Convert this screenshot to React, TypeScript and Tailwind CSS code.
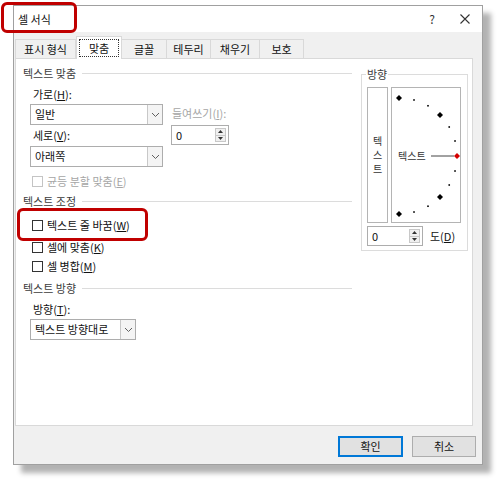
import React from 'react';

const font = { fontFamily: '"Noto Sans CJK KR", "Noto Sans", sans-serif' };

const Chevron: React.FC = () => (
  <svg width="9" height="6" viewBox="0 0 9 6" fill="none">
    <path d="M1 1l3.5 3.5L8 1" stroke="#606060" strokeWidth="1" />
  </svg>
);

const Select: React.FC<{ label: string; width: string }> = ({ label, width }) => (
  <div className={`flex h-[21px] ${width} border border-[#adadad] bg-white`}>
    <div className="flex flex-1 items-center pl-[4px] text-[11px] text-[#111]">{label}</div>
    <div className="flex w-[15px] items-center justify-center border-l border-[#c8c8c8] bg-[#f4f4f4]">
      <Chevron />
    </div>
  </div>
);

const Spinner: React.FC<{ width: string }> = ({ width }) => (
  <div className={`flex h-[20px] ${width} border border-[#adadad] bg-white`}>
    <div className="flex flex-1 items-center pl-[4px] text-[11px] text-[#111]">0</div>
    <div className="my-[2px] mr-[2px] flex w-[11px] flex-col border border-[#c8c8c8] bg-[#f0f0f0]">
      <div className="flex flex-1 items-center justify-center border-b border-[#c8c8c8]">
        <svg width="5" height="3" viewBox="0 0 5 3"><path d="M0 3L2.5 0L5 3z" fill="#333" /></svg>
      </div>
      <div className="flex flex-1 items-center justify-center">
        <svg width="5" height="3" viewBox="0 0 5 3"><path d="M0 0L2.5 3L5 0z" fill="#333" /></svg>
      </div>
    </div>
  </div>
);

const Check: React.FC<{ children: React.ReactNode; disabled?: boolean }> = ({ children, disabled }) => (
  <div className="flex h-[16px] items-center pl-[9px]">
    <div className={`h-[11px] w-[11px] border bg-white ${disabled ? 'border-[#c4c4c4]' : 'border-[#333]'}`} />
    <span className={`ml-[4px] text-[11px] ${disabled ? 'text-[#a6a6a6]' : 'text-[#111]'}`}>{children}</span>
  </div>
);

const Heading: React.FC<{ children: React.ReactNode }> = ({ children }) => (
  <div className="flex h-[16px] items-center gap-[6px]">
    <span className="text-[11px] text-[#3c3c3c]">{children}</span>
    <div className="h-px flex-1 bg-[#dcdcdc]" />
  </div>
);

const Label: React.FC<{ children: React.ReactNode; className?: string }> = ({ children, className = '' }) => (
  <div className={`flex h-[14px] items-center text-[11px] text-[#111] ${className}`}>{children}</div>
);

const tabs = ['표시 형식', '맞춤', '글꼴', '테두리', '채우기', '보호'];
const tabWidths = ['w-[61px]', 'w-[46px]', 'w-[46px]', 'w-[45px]', 'w-[50px]', 'w-[45px]'];

const ArcDial: React.FC = () => {
  const cx = 7;
  const cy = 68;
  const r = 58;
  const pts = [90, 75, 60, 45, 30, 15, -15, -30, -45, -60, -75, -90];
  return (
    <div className="relative h-[136px] w-[70px] border border-[#b4b4b4] bg-white">
      <svg className="absolute inset-0" width="68" height="134" viewBox="0 0 68 134">
        {pts.map((a) => {
          const x = cx + r * Math.cos((a * Math.PI) / 180);
          const y = cy - r * Math.sin((a * Math.PI) / 180);
          const big = a % 45 === 0;
          return big ? (
            <path key={a} d={`M${x} ${y - 3}L${x + 3} ${y}L${x} ${y + 3}L${x - 3} ${y}z`} fill="#000" />
          ) : (
            <rect key={a} x={x - 0.8} y={y - 0.8} width="1.6" height="1.6" fill="#000" />
          );
        })}
        <line x1="39" y1={cy} x2="62" y2={cy} stroke="#444" strokeWidth="1" />
        <path d={`M${cx + r} ${cy - 3}L${cx + r + 3} ${cy}L${cx + r} ${cy + 3}L${cx + r - 3} ${cy}z`} fill="#d40000" />
      </svg>
      <span className="absolute left-[6px] top-[60px] text-[10px] leading-[16px] text-[#333]">텍스트</span>
    </div>
  );
};

export default function App() {
  return (
    <div className="relative h-[481px] w-[500px] overflow-hidden bg-white pl-[13px] pt-[5px]" style={font}>
      <div className="flex h-[460px] w-[470px] flex-col border border-[#a0a0a0] bg-white shadow-[8px_8px_5px_rgba(0,0,0,0.3)]">
        {/* title bar */}
        <div className="flex h-[26px] items-center bg-white pl-[4px] pr-[12px]">
          <span className="text-[11px] text-[#111]">셀 서식</span>
          <span className="ml-auto text-[12px] text-[#333]">?</span>
          <svg className="ml-[25px]" width="10" height="10" viewBox="0 0 10 10">
            <path d="M0.5 0.5L9.5 9.5M9.5 0.5L0.5 9.5" stroke="#333" strokeWidth="1.1" />
          </svg>
        </div>

        <div className="flex flex-1 flex-col bg-[#f0f0f0]">
          {/* tabs */}
          <div className="relative z-10 -mb-px flex items-end pl-[1px] pt-[4px]">
            {tabs.map((t, i) =>
              i === 1 ? (
                <div key={t} className={`flex h-[23px] ${tabWidths[i]} items-center justify-center border border-b-0 border-[#d9d9d9] bg-white px-[2px]`}>
                  <div className="flex h-[18px] w-full items-center justify-center border border-dotted border-[#333] text-[11px] text-[#111]">
                    {t}
                  </div>
                </div>
              ) : (
                <div
                  key={t}
                  className={`flex h-[20px] ${tabWidths[i]} items-center justify-center border border-[#d9d9d9] bg-[#f0f0f0] text-[11px] text-[#111] ${i > 1 ? '-ml-px' : ''}`}
                >
                  {t}
                </div>
              )
            )}
          </div>

          {/* panel */}
          <div className="ml-[1px] flex h-[368px] w-[458px] border border-[#d9d9d9] bg-white pl-[7px] pt-[6px]">
            <div className="flex w-[329px] flex-col">
              <Heading>텍스트 맞춤</Heading>
              <Label className="ml-[10px] mt-[6px]">가로(<u>H</u>):</Label>
              <div className="ml-[7px] mt-[3px] flex gap-[8px]">
                <div className="flex flex-col">
                  <Select label="일반" width="w-[133px]" />
                  <Label className="ml-[3px] mt-[3px]">세로(<u>V</u>):</Label>
                  <div className="mt-[4px]">
                    <Select label="아래쪽" width="w-[133px]" />
                  </div>
                </div>
                <div className="flex flex-col">
                  <Label className="mt-[2px] pl-[1px]">
                    <span className="text-[#a6a6a6]">들여쓰기(<u>I</u>):</span>
                  </Label>
                  <div className="mt-[5px]">
                    <Spinner width="w-[58px]" />
                  </div>
                </div>
              </div>
              <div className="mt-[6px]">
                <Check disabled>
                  균등 분할 맞춤(<u>E</u>)
                </Check>
              </div>
              <div className="mt-[4px]">
                <Heading>텍스트 조정</Heading>
              </div>
              <div className="mt-[8px]">
                <Check>
                  텍스트 줄 바꿈(<u>W</u>)
                </Check>
              </div>
              <div className="mt-[6px]">
                <Check>
                  셀에 맞춤(<u>K</u>)
                </Check>
              </div>
              <div className="mt-[3px]">
                <Check>
                  셀 병합(<u>M</u>)
                </Check>
              </div>
              <div className="mt-[6px]">
                <Heading>텍스트 방향</Heading>
              </div>
              <Label className="ml-[10px] mt-[6px]">방향(<u>T</u>):</Label>
              <div className="ml-[7px] mt-[3px]">
                <Select label="텍스트 방향대로" width="w-[106px]" />
              </div>
            </div>

            {/* orientation group */}
            <div className="relative ml-[9px] mt-[9px] h-[177px] w-[107px] border border-[#dcdcdc] pl-[5px] pt-[12px]">
              <span className="absolute -top-[9px] left-[4px] bg-white px-[1px] text-[11px] text-[#3c3c3c]">방향</span>
              <div className="flex gap-[3px]">
                <div className="flex h-[136px] w-[21px] flex-col items-center justify-center border border-[#b4b4b4] bg-white text-[10px] leading-[14px] text-[#333]">
                  <span>텍</span>
                  <span>스</span>
                  <span>트</span>
                </div>
                <ArcDial />
              </div>
              <div className="mt-[3px] flex items-center gap-[7px]">
                <Spinner width="w-[56px]" />
                <span className="text-[11px] text-[#111]">
                  도(<u>D</u>)
                </span>
              </div>
            </div>
          </div>

          {/* footer */}
          <div className="flex flex-1 items-start justify-end gap-[9px] pr-[6px] pt-[10px]">
            <button className="flex h-[21px] w-[65px] items-center justify-center border-2 border-[#0078d7] bg-[#e1e1e1] text-[11px] text-[#111]">
              확인
            </button>
            <button className="flex h-[21px] w-[64px] items-center justify-center border border-[#adadad] bg-[#e1e1e1] text-[11px] text-[#111]">
              취소
            </button>
          </div>
        </div>
      </div>

      {/* red annotation boxes */}
      <div className="absolute left-[1px] top-[2px] h-[31px] w-[76px] rounded-[6px] border-[3px] border-[#c00000]" />
      <div className="absolute left-[17px] top-[208px] h-[33px] w-[131px] rounded-[6px] border-[3px] border-[#c00000]" />
    </div>
  );
}
